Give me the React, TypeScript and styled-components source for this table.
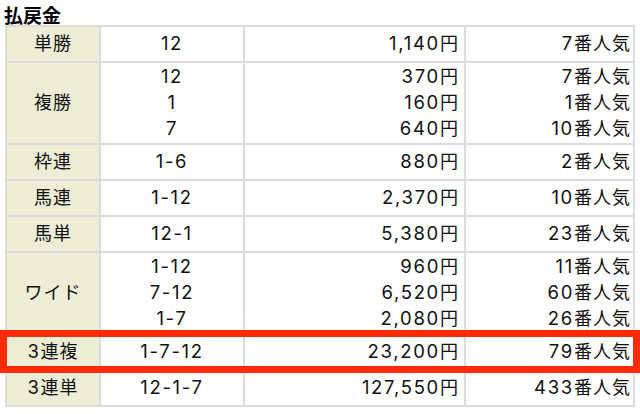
import * as React from "react";
import styled, { createGlobalStyle } from "styled-components";

interface PayoutRow {
  kind: string;
  numbers: string[];
  amounts: string[];
  ranks: string[];
}

const rows: PayoutRow[] = [
  { kind: "単勝", numbers: ["12"], amounts: ["1,140円"], ranks: ["7番人気"] },
  {
    kind: "複勝",
    numbers: ["12", "1", "7"],
    amounts: ["370円", "160円", "640円"],
    ranks: ["7番人気", "1番人気", "10番人気"]
  },
  { kind: "枠連", numbers: ["1-6"], amounts: ["880円"], ranks: ["2番人気"] },
  { kind: "馬連", numbers: ["1-12"], amounts: ["2,370円"], ranks: ["10番人気"] },
  { kind: "馬単", numbers: ["12-1"], amounts: ["5,380円"], ranks: ["23番人気"] },
  {
    kind: "ワイド",
    numbers: ["1-12", "7-12", "1-7"],
    amounts: ["960円", "6,520円", "2,080円"],
    ranks: ["11番人気", "60番人気", "26番人気"]
  },
  { kind: "3連複", numbers: ["1-7-12"], amounts: ["23,200円"], ranks: ["79番人気"] },
  { kind: "3連単", numbers: ["12-1-7"], amounts: ["127,550円"], ranks: ["433番人気"] }
];

const GlobalStyle = createGlobalStyle`
  html, body {
    margin: 0;
    padding: 0;
    background: #fff;
  }
  body {
    font-family: Inter, "Noto Sans CJK JP", sans-serif;
    color: #111;
  }
`;

const Page = styled.div`
  position: relative;
  width: 640px;
  height: 414px;
  overflow: hidden;
`;

const Title = styled.h2`
  margin: 0;
  padding: 5px 0 0 4px;
  font-family: "Noto Sans CJK JP", sans-serif;
  font-size: 19px;
  line-height: 20px;
  font-weight: bold;
  color: #000;
`;

const Table = styled.table`
  border-collapse: collapse;
  table-layout: fixed;
  width: 630px;
  margin-left: 5px;
  font-size: 18px;
  letter-spacing: 1px;
`;

const Col = styled.col<{ $w: number }>`
  width: ${({ $w }) => $w}px;
`;

const KindCell = styled.th<{ $multi: boolean }>`
  border: 2px solid #dcdcdc;
  background: #eeedd5;
  font-weight: normal;
  text-align: center;
  line-height: 26px;
  padding: ${({ $multi }) => ($multi ? "1px 0" : "4px 0")};
`;

const Cell = styled.td<{ $multi: boolean; $align: "center" | "right"; $pad: number }>`
  border: 2px solid #dcdcdc;
  background: #fff;
  text-align: ${({ $align }) => $align};
  line-height: 26px;
  padding: ${({ $multi, $pad }) => ($multi ? `1px ${$pad}px 1px 0` : `4px ${$pad}px 4px 0`)};
  white-space: nowrap;
`;

const Line = styled.div`
  height: 26px;
  line-height: 26px;
`;

// digits in the original are set wider than the kanji around them
const Num = styled.span`
  font-size: 18.5px;
  letter-spacing: 1.7px;
  line-height: 0;
`;

const Highlight = styled.div`
  position: absolute;
  left: 0;
  top: 330px;
  width: 640px;
  height: 43px;
  box-sizing: border-box;
  border: 7px solid #ff2a08;
  pointer-events: none;
`;

const Text: React.FC<{ value: string }> = ({ value }) => {
  const parts = value.match(/[0-9,\-]+|[^0-9,\-]+/g) || [];
  return (
    <>
      {parts.map((part, i) =>
        /[0-9]/.test(part) ? <Num key={i}>{part}</Num> : <span key={i}>{part}</span>
      )}
    </>
  );
};

const Lines: React.FC<{ items: string[] }> = ({ items }) => (
  <>
    {items.map((item, i) => (
      <Line key={i}>
        <Text value={item} />
      </Line>
    ))}
  </>
);

export default function App() {
  return (
    <Page>
      <GlobalStyle />
      <Title>払戻金</Title>
      <Table>
        <colgroup>
          <Col $w={94} />
          <Col $w={144} />
          <Col $w={221} />
          <Col $w={169} />
        </colgroup>
        <tbody>
          {rows.map(row => {
            const multi = row.numbers.length > 1;
            return (
              <tr key={row.kind}>
                <KindCell $multi={multi}>
                  <Lines items={[row.kind]} />
                </KindCell>
                <Cell $multi={multi} $align="center" $pad={0}>
                  <Lines items={row.numbers} />
                </Cell>
                <Cell $multi={multi} $align="right" $pad={5}>
                  <Lines items={row.amounts} />
                </Cell>
                <Cell $multi={multi} $align="right" $pad={2}>
                  <Lines items={row.ranks} />
                </Cell>
              </tr>
            );
          })}
        </tbody>
      </Table>
      <Highlight />
    </Page>
  );
}
